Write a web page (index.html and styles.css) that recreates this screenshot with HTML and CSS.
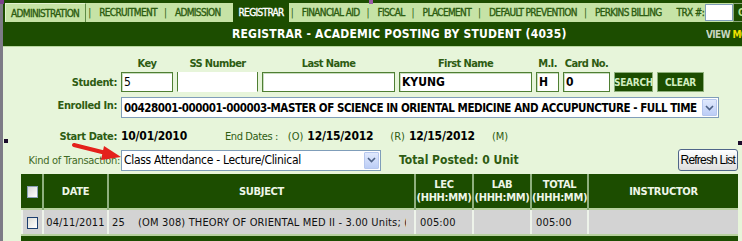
FILE: index.html
```html
<!DOCTYPE html>
<html lang="en">

<head>
    <meta charset="utf-8">
    <title>Registrar - Academic Posting by Student</title>
    <link rel="stylesheet" href="styles.css">
</head>

<body>

    <div id="frame">

        <!-- top module tabs -->
        <div id="tabs">
            <div class="tablist">
                <span class="tab first">ADMINISTRATION</span>
                <span class="sep">|</span>
                <span class="tab">RECRUITMENT</span>
                <span class="sep">|</span>
                <span class="tab">ADMISSION</span>
                <span class="tab active">REGISTRAR</span>
                <span class="sep">|</span>
                <span class="tab">FINANCIAL AID</span>
                <span class="sep">|</span>
                <span class="tab">FISCAL</span>
                <span class="sep">|</span>
                <span class="tab">PLACEMENT</span>
                <span class="sep">|</span>
                <span class="tab">DEFAULT PREVENTION</span>
                <span class="sep">|</span>
                <span class="tab">PERKINS BILLING</span>
                <span class="tab trx">TRX #:</span>
                <input type="text" class="trx_input">
                <span class="go">GO</span>
            </div>
        </div>

        <div id="titlebar">
            <h1>REGISTRAR - ACADEMIC POSTING BY STUDENT (4035)</h1>
            <span class="view">VIEW <span class="view_m">MODE</span></span>
        </div>

        <div id="content">

            <div class="student_form">
                <span></span>
                <span class="colhead">Key</span>
                <span class="colhead">SS Number</span>
                <span class="colhead">Last Name</span>
                <span class="colhead">First Name</span>
                <span class="colhead">M.I.</span>
                <span class="colhead">Card No.</span>
                <span></span>
                <span></span>

                <span class="label">Student:</span>
                <input type="text" class="field" value="5">
                <input type="text" class="field ss">
                <input type="text" class="field">
                <input type="text" class="field bold" value="KYUNG">
                <input type="text" class="field bold" value="H">
                <input type="text" class="field bold" value="0">
                <div class="gbutton">SEARCH</div>
                <div class="gbutton">CLEAR</div>

                <span class="label">Enrolled In:</span>
                <div class="select enrolled">
                    <span class="select_text bold">00428001-000001-000003-MASTER OF SCIENCE IN ORIENTAL MEDICINE AND ACCUPUNCTURE - FULL TIME</span>
                    <span class="select_arrow"><svg width="9" height="6" viewBox="0 0 9 6"><path d="M1 1 L4.5 4.5 L8 1" fill="none" stroke="#4d6185" stroke-width="1.6"/></svg></span>
                </div>
            </div>

            <div class="dates">
                <span class="label date_label">Start Date:</span>
                <span class="date_value">10/01/2010</span>
                <span class="label end_label">End Dates :</span>
                <span class="mark">(O)</span>
                <span class="date_value">12/15/2012</span>
                <span class="mark r">(R)</span>
                <span class="date_value">12/15/2012</span>
                <span class="mark r">(M)</span>
            </div>

            <div class="kind">
                <span class="kind_label">Kind of Transaction:</span>
                <div class="select transaction">
                    <span class="select_text">Class Attendance - Lecture/Clinical</span>
                    <span class="select_arrow"><svg width="9" height="6" viewBox="0 0 9 6"><path d="M1 1 L4.5 4.5 L8 1" fill="none" stroke="#4d6185" stroke-width="1.6"/></svg></span>
                </div>
                <span class="label total">Total Posted: 0 Unit</span>
                <span class="refresh">Refresh List</span>
            </div>

            <table class="posting">
                <colgroup>
                    <col class="w_check">
                    <col class="w_date">
                    <col class="w_subject">
                    <col class="w_hours">
                    <col class="w_hours">
                    <col class="w_total">
                    <col>
                </colgroup>
                <tr class="head">
                    <th><span class="checkbox"></span></th>
                    <th>DATE</th>
                    <th>SUBJECT</th>
                    <th>LEC<br>(HHH:MM)</th>
                    <th>LAB<br>(HHH:MM)</th>
                    <th>TOTAL<br>(HHH:MM)</th>
                    <th>INSTRUCTOR</th>
                </tr>
                <tr class="row">
                    <td><span class="checkbox"></span></td>
                    <td class="date">04/11/2011</td>
                    <td class="subject_cell"><div class="subject">25&nbsp;&nbsp;&nbsp;&nbsp;(OM 308) THEORY OF ORIENTAL MED II - 3.00 Units; (OM 308)</div></td>
                    <td>005:00</td>
                    <td></td>
                    <td>005:00</td>
                    <td></td>
                </tr>
            </table>
            <div class="table_foot"></div>

        </div>

        <!-- annotation arrow drawn over the screenshot -->
        <svg class="arrow" width="60" height="24" viewBox="0 0 60 24">
            <path d="M2 3 L38 12" stroke="#e4211c" stroke-width="4" stroke-linecap="round"/>
            <path d="M32 4 L49 15 L29 18 Z" fill="#e4211c"/>
        </svg>
        <span class="handle h_left"></span>
        <span class="handle h_right"></span>
        <span class="handle h_top"></span>
        <span class="handle h_corner"></span>
    </div>

</body>

</html>
```

FILE: styles.css
```css
html,
body {
    margin: 0px;
    padding: 0px;
    width: 742px;
    height: 241px;
    overflow: hidden;
    background-color: #e7f5da;
    font-family: "DejaVu Sans Condensed", "DejaVu Sans", sans-serif;
}

#frame {
    position: relative;
    height: 241px;
    border-left: 3px solid #7d7b86;
    background-color: #e7f5da;
}

/* tabs */

#tabs {
    background-color: #1c4d00;
    padding: 3px 0px 0px 2px;
    height: 19px;
    display: flex;
    overflow: hidden;
}

.tablist {
    flex: 1;
    display: flex;
    align-items: stretch;
    background-color: #c6e3a6;
    color: #2c5c10;
    font-size: 10px;
    letter-spacing: -0.65px;
    white-space: nowrap;
}

.tab {
    display: flex;
    align-items: center;
    padding: 0px 5px 0px 6px;
    -webkit-text-stroke: 0.35px #2c5c10;
}

.tab.first {
    border: 1px solid #e2f2d0;
    border-right-color: #5f8a45;
    border-bottom: none;
    padding: 0px 6px 0px 5px;
}

.tab.active {
    background-color: #1c4d00;
    color: #ffffff;
    -webkit-text-stroke: 0.35px #ffffff;
    margin-left: 7px;
    padding: 0px 5px 0px 6px;
}

.sep {
    display: flex;
    align-items: center;
    padding: 0px 2px;
    letter-spacing: 0px;
}

.tab.trx {
    padding: 0px 1px 0px 10px;
}

.trx_input {
    width: 26px;
    height: 15px;
    margin: 0px;
    padding: 0px;
    border: 1px solid #7f9db9;
    align-self: center;
}

.go {
    background-color: #1c4d00;
    color: #b8e08e;
    border: 1px solid #8aa77a;
    padding: 0px 4px;
    display: flex;
    align-items: center;
    font-weight: bold;
    letter-spacing: 0px;
}

/* title */

#titlebar {
    background-color: #1c4d00;
    height: 24px;
    display: flex;
    align-items: center;
    border-bottom: 1px solid #b9d8a0;
}

#titlebar h1 {
    margin: 0px;
    padding-left: 229px;
    font-size: 12px;
    color: #ffffff;
    letter-spacing: 0.2px;
    white-space: nowrap;
}

.view {
    margin-left: auto;
    font-size: 10px;
    font-weight: bold;
    color: #c8d6c0;
    white-space: nowrap;
    width: 36px;
    overflow: hidden;
    letter-spacing: -0.6px;
}

.view_m {
    color: #f0e000;
}

/* form */

#content {
    padding-top: 10px;
}

.student_form {
    display: grid;
    grid-template-columns: 114px 52px 81px 133px 133px 23px 47px 39px 47px;
    column-gap: 4px;
    align-items: end;
}

.colhead {
    text-align: center;
    font-size: 11px;
    font-weight: bold;
    color: #2e5c12;
    letter-spacing: -0.6px;
    padding-bottom: 2px;
    white-space: nowrap;
}

.label {
    text-align: right;
    font-size: 11px;
    font-weight: bold;
    color: #2e5c12;
    letter-spacing: -0.4px;
    white-space: nowrap;
}

.student_form .label {
    align-self: center;
}

.field {
    box-sizing: border-box;
    height: 20px;
    width: 100%;
    margin: 0px;
    padding: 0px 2px;
    border: 1px solid #4f7f33;
    box-shadow: inset 1px 1px 0px #c9dcc0;
    background-color: #ffffff;
    font-family: inherit;
    font-size: 12px;
    color: #000000;
}

.field.ss {
    border-top: none;
    border-bottom-color: #ffffff;
    box-shadow: none;
}

.bold {
    font-weight: bold;
}

.gbutton {
    box-sizing: border-box;
    height: 20px;
    background-color: #1c4d00;
    border: 1px solid #8db07a;
    color: #d2eec0;
    font-size: 10px;
    font-weight: bold;
    display: flex;
    align-items: center;
    justify-content: center;
    letter-spacing: -0.3px;
}

.select {
    box-sizing: border-box;
    display: flex;
    align-items: center;
    height: 21px;
    background-color: #ffffff;
    border: 1px solid #7f9db9;
    padding-left: 2px;
    font-size: 12px;
    color: #000000;
    overflow: hidden;
}

.select_text {
    flex: 1;
    white-space: nowrap;
    overflow: hidden;
    letter-spacing: -0.3px;
}

.enrolled .select_text {
    font-size: 11.5px;
    letter-spacing: -0.45px;
}

.select_arrow {
    box-sizing: border-box;
    width: 15px;
    height: 17px;
    margin-right: 1px;
    background: linear-gradient(#e0e9fd, #bccdf6);
    border: 1px solid #b6c7ee;
    border-radius: 1px;
    display: flex;
    align-items: center;
    justify-content: center;
}

.student_form .enrolled {
    grid-column: 2 / -1;
    width: 598px;
    margin-top: 5px;
}

.dates {
    display: flex;
    align-items: baseline;
    margin-top: 11px;
}

.date_label {
    width: 114px;
}

.date_value {
    font-size: 12px;
    font-weight: bold;
    color: #000000;
    margin-left: 4px;
    letter-spacing: -0.2px;
}

.end_label {
    margin-left: 38px;
    font-weight: normal;
}

.mark {
    font-size: 11px;
    color: #2e5c12;
    margin-left: 10px;
}

.mark.r {
    margin-left: 17px;
}

.kind {
    display: flex;
    align-items: center;
    margin-top: 6px;
}

.kind_label {
    width: 117px;
    text-align: right;
    font-size: 11px;
    color: #3f6a25;
    white-space: nowrap;
    letter-spacing: -0.3px;
}

.select.transaction {
    width: 260px;
    margin-left: 1px;
    font-weight: normal;
}

.total {
    margin-left: 18px;
    font-size: 12px;
    letter-spacing: 0px;
}

.refresh {
    margin-left: auto;
    margin-right: 4px;
    box-sizing: border-box;
    height: 22px;
    padding: 0px 2px;
    border: 1px solid #4f6589;
    border-radius: 3px;
    background: linear-gradient(#ffffff, #dedede);
    font-family: "Liberation Sans", sans-serif;
    font-size: 12px;
    letter-spacing: -0.8px;
    display: flex;
    align-items: center;
}

/* posting table */

.posting {
    margin: 3px 0px 0px 18px;
    width: 717px;
    border-collapse: collapse;
    table-layout: fixed;
    background-color: #1c4d00;
}

.w_check {
    width: 21px;
}

.w_date {
    width: 65px;
}

.w_subject {
    width: 307px;
}

.w_hours {
    width: 58px;
}

.w_total {
    width: 57px;
}

.posting th {
    height: 34px;
    padding: 0px;
    color: #eef6e8;
    font-size: 11px;
    font-weight: bold;
    letter-spacing: -0.3px;
    border-left: 2px solid #8fb07e;
    line-height: 13px;
}

.posting th:first-child,
.posting td:first-child {
    border-left: none;
}

.posting .row td {
    height: 24px;
    padding: 0px 4px;
    background-color: #d3d3d3;
    border-left: 2px solid #eef3ea;
    border-top: 2px solid #b7d19f;
    border-bottom: 2px solid #b7d19f;
    font-size: 11px;
    color: #111111;
    white-space: nowrap;
    overflow: hidden;
    letter-spacing: 0.15px;
}

.posting .row td:first-child {
    padding: 0px;
    text-align: center;
}

.posting .row td.date {
    padding: 0px;
    text-align: center;
}

.posting .row td.subject_cell {
    padding: 0px 0px 0px 3px;
}

.subject {
    overflow: hidden;
    white-space: nowrap;
    margin-right: 8px;
}

.checkbox {
    display: inline-block;
    box-sizing: border-box;
    width: 11px;
    height: 12px;
    vertical-align: middle;
    border: 1px solid #1c3f70;
    background: linear-gradient(135deg, #dcdcd6, #ffffff);
}

.head .checkbox {
    border-color: #8aa0b8;
    background: linear-gradient(135deg, #d8d8d8, #ffffff);
}

.table_foot {
    margin-left: 18px;
    width: 717px;
    height: 10px;
    background-color: #1c4d00;
}

/* overlays */

.arrow {
    position: absolute;
    left: 69px;
    top: 142px;
}

.handle {
    position: absolute;
    width: 4px;
    height: 4px;
    background-color: #1a0a2a;
}

.h_left {
    left: 1px;
    top: 139px;
}

.h_right {
    left: 735px;
    top: 141px;
}

.h_top {
    left: 366px;
    top: 0px;
    background-color: #9a5aa6;
}

.h_corner {
    left: -3px;
    top: 0px;
    background-color: #7a3f8a;
}
```
